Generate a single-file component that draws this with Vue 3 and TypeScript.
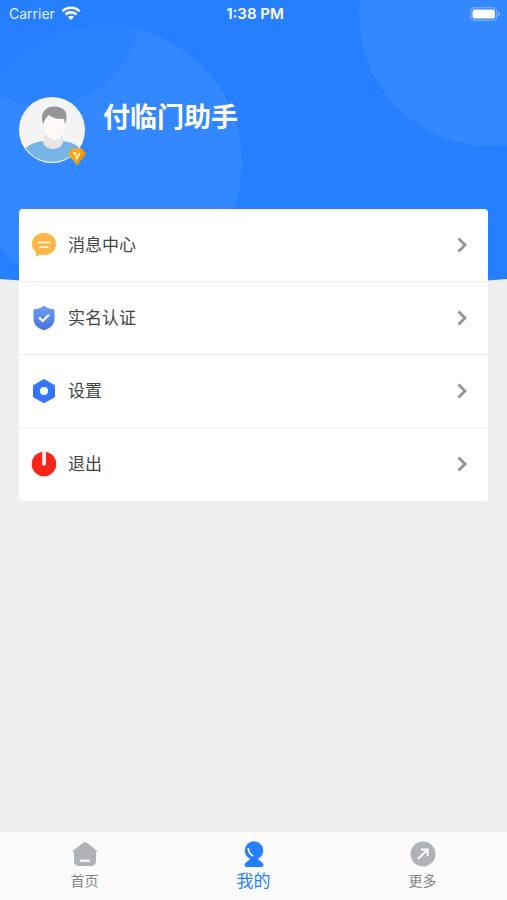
<script setup lang="ts">
import { ref } from 'vue'

type IconName = 'message' | 'shield' | 'settings' | 'power'
type TabName = 'home' | 'mine' | 'more'

const menu: { icon: IconName; label: string }[] = [
  { icon: 'message', label: '消息中心' },
  { icon: 'shield', label: '实名认证' },
  { icon: 'settings', label: '设置' },
  { icon: 'power', label: '退出' },
]

const tabs: { name: TabName; label: string }[] = [
  { name: 'home', label: '首页' },
  { name: 'mine', label: '我的' },
  { name: 'more', label: '更多' },
]

const active = ref<TabName>('mine')
</script>

<template>
  <div class="screen">
    <svg class="backdrop" viewBox="0 0 507 290" aria-hidden="true">
      <defs>
        <clipPath id="hero-shape"><path d="M0 0H507V279Q253 301 0 279Z" /></clipPath>
        <clipPath id="large-circle"><circle cx="106" cy="162" r="136" /></clipPath>
      </defs>
      <g clip-path="url(#hero-shape)">
        <rect width="507" height="290" fill="#267fff" />
        <circle cx="106" cy="162" r="136" fill="#3488ff" />
        <circle cx="43" cy="8" r="98" fill="#2a82ff" clip-path="url(#large-circle)" />
        <circle cx="490" cy="15" r="131" fill="#3488ff" />
      </g>
    </svg>

    <div class="status">
      <div class="carrier">
        <span>Carrier</span>
        <svg width="20" height="15" viewBox="0 0 20 15" aria-hidden="true">
          <g fill="none" stroke="#fff" stroke-width="2.6">
            <path d="M1.4 5.2C6.1.6 13.900.6 18.600 5.200" />
            <path d="M4.500 8.500C7.500 5.700 12.500 5.700 15.500 8.500" />
          </g>
          <path d="M6.900 10.900C8.600 9.300 11.400 9.300 13.100 10.900L10 14Z" fill="#fff" />
        </svg>
      </div>
      <span class="time">1:38 PM</span>
      <svg class="battery" width="31" height="14" viewBox="0 0 31 14" aria-hidden="true">
        <rect x=".7" y=".7" width="26" height="12.6" rx="4" fill="none" stroke="#79afff" stroke-width="1.2" />
        <rect x="2.5" y="2.5" width="22.5" height="9" rx="2.2" fill="#fff" />
        <path d="M28.2 4.8C30.4 5.4 30.4 8.6 28.2 9.2Z" fill="#8dbbff" />
      </svg>
    </div>

    <header class="profile">
      <div class="avatar">
        <svg width="66" height="66" viewBox="0 0 66 66" role="img" aria-label="头像">
          <defs><clipPath id="face"><circle cx="33" cy="33" r="32" /></clipPath></defs>
          <circle cx="33" cy="33" r="33" fill="#fff" />
          <g clip-path="url(#face)">
            <rect width="66" height="66" fill="#f4f4f4" />
            <path d="M3 66V54C10 47 17 45 24 44H44C51 45 58 47 64 54V66Z" fill="#77b4e7" />
            <path d="M25 37H44V45C43 50 38 52 34 52S25 50 24 45L25 43Z" fill="#e9e4e4" />
            <path d="M25 20Q35 14 46 20L45.500 32C45 38 40 43 35.500 43S26 38 25.500 32Z" fill="#fdf9f8" />
            <path d="M24 27C22 20 23 15 27 12C32 8 43 9 46 14C48 17 48 22 46 27L45 22C38 22 33 21 30 18C27 20 26 23 24 27Z" fill="#969696" />
          </g>
        </svg>
        <svg class="badge" width="18" height="17" viewBox="0 0 18 17" aria-hidden="true">
          <path d="M4 .5H14L18 6L9 17L0 6Z" fill="#fba816" />
          <path d="M14 .5L18 6L9 17V10L13 5Z" fill="#ee9310" />
          <path d="M5 5.200H7.200L9 10.500L12 5.200" fill="none" stroke="#fff2cd" stroke-width="1.700" />
        </svg>
      </div>
      <h1>付临门助手</h1>
    </header>

    <main>
      <nav class="card" aria-label="个人菜单">
        <a v-for="item in menu" :key="item.icon" href="#" class="row" @click.prevent>
          <svg class="icon" viewBox="0 0 26 26" aria-hidden="true">
            <template v-if="item.icon === 'message'">
              <path d="M13 1C19.8 1 25 5.4 25 12S19.8 23 13 23C11.5 23 10.3 22.8 9 22.4L5 25V20.3C2.4 18.3 1 15.4 1 12C1 5.4 6.2 1 13 1Z" fill="#ffb644" />
              <path d="M7 10.5H19M9 15H17" stroke="#fff0cf" stroke-width="1.8" stroke-linecap="round" />
            </template>
            <template v-else-if="item.icon === 'shield'">
              <defs>
                <linearGradient id="shield-fill" x2="0" y2="1">
                  <stop stop-color="#6b9cf0" /><stop offset="1" stop-color="#4474dc" />
                </linearGradient>
              </defs>
              <path d="M13 .7C16 3 19 4 23.500 4.300V14C23.500 19.500 19.500 23.200 13 25.300C6.500 23.200 2.500 19.500 2.500 14V4.300C7 4 10 3 13 .7Z" fill="url(#shield-fill)" />
              <path d="M8 12.500L11.700 16L18 9.800" fill="none" stroke="#fff" stroke-width="2.300" />
            </template>
            <template v-else-if="item.icon === 'settings'">
              <path d="M13 1.500L23.500 7.500V19L13 24.700L2.500 19V7.500Z" fill="#3476fa" stroke="#3476fa" stroke-width="1" stroke-linejoin="round" />
              <circle cx="13" cy="13" r="4" fill="#fff" />
            </template>
            <template v-else>
              <circle cx="13" cy="13" r="12.300" fill="#f7261b" />
              <path d="M11.200 0H15V12.700A1.900 1.900 0 0 1 11.200 12.700Z" fill="#ffecea" />
            </template>
          </svg>
          <span class="label">{{ item.label }}</span>
          <svg class="chevron" viewBox="0 0 10 16" aria-hidden="true">
            <path d="M1.500 1.500L8 8L1.500 14.500" fill="none" stroke="#929292" stroke-width="2.800" />
          </svg>
        </a>
      </nav>
    </main>

    <nav class="tabs" aria-label="主导航">
      <button
        v-for="tab in tabs"
        :key="tab.name"
        type="button"
        class="tab"
        :class="{ active: active === tab.name }"
        @click="active = tab.name"
      >
        <svg class="icon" viewBox="0 0 26 26" aria-hidden="true">
          <template v-if="tab.name === 'home'">
            <path d="M11.500 1.400Q13 .4 14.500 1.400L25 9.700Q26 11 24 11.200V20Q24 25 19 25H7Q2 25 2 20V11.200Q0 11 1 9.700Z" fill="currentColor" />
            <rect x="8" y="18.500" width="10" height="2.500" rx="1" fill="#f4f4f5" />
          </template>
          <template v-else-if="tab.name === 'mine'">
            <circle cx="13" cy="9.500" r="9.300" fill="currentColor" />
            <path d="M9 17H17C17 20 22.500 21 22.500 24Q22.500 26 20.500 26H5.500Q3.500 26 3.500 24C3.500 21 9 20 9 17Z" fill="currentColor" />
            <path d="M7.300 8Q7.800 12.500 11.500 14.500" fill="none" stroke="#fff" stroke-width="1.800" stroke-linecap="round" />
          </template>
          <template v-else>
            <circle cx="13" cy="13" r="12.500" fill="currentColor" />
            <path d="M8 18L17 9M11 8.500H17.700V15" fill="none" stroke="#fff" stroke-width="1.900" />
          </template>
        </svg>
        <span>{{ tab.label }}</span>
      </button>
    </nav>
  </div>
</template>

<style>
body {
  margin: 0;
}
</style>

<style scoped>
.screen {
  position: relative;
  isolation: isolate;
  display: flex;
  flex-direction: column;
  min-height: 100vh;
  background: #efefef;
  font-family: Inter, "Noto Sans CJK SC", sans-serif;
}

.backdrop {
  position: absolute;
  top: 0;
  left: 0;
  z-index: -1;
  width: 100%;
}

.status {
  display: grid;
  grid-template-columns: 1fr auto 1fr;
  align-items: center;
  height: 27px;
  padding: 0 6px 0 9px;
  color: #fff;
  font-size: 14px;
}

.carrier {
  display: flex;
  align-items: center;
  gap: 6px;
  color: #e4efff;
}

.time {
  font-size: 15px;
  font-weight: 600;
}

.battery {
  justify-self: end;
}

.profile {
  display: flex;
  gap: 18px;
  padding: 70px 19px 0;
  height: 112px;
}

.avatar {
  position: relative;
  width: 66px;
  height: 66px;
}

.badge {
  position: absolute;
  right: -1px;
  bottom: -2px;
}

h1 {
  margin: 0;
  color: #fff;
  font-size: 27px;
  line-height: 42px;
  font-weight: 700;
}

main {
  flex: 1;
  padding: 0 19px;
}

.card {
  overflow: hidden;
  border-radius: 4px;
  background: #fff;
}

.row {
  display: flex;
  align-items: center;
  box-sizing: border-box;
  height: 73px;
  padding: 0 21px 0 12px;
  border-bottom: 1px solid #f0f0f0;
  color: #444;
  font-size: 17px;
  line-height: 24px;
  text-decoration: none;
}

.row:last-child {
  border-color: transparent;
}

.icon {
  width: 26px;
  height: 26px;
}

.label {
  flex: 1;
  margin-left: 11px;
}

.chevron {
  width: 10px;
  height: 16px;
}

.tabs {
  display: grid;
  grid-template-columns: repeat(3, 1fr);
  height: 68px;
  background: #fbfbfb;
  box-shadow: 0 -1px 3px rgba(0, 0, 0, 0.02);
}

.tab {
  display: flex;
  flex-direction: column;
  align-items: center;
  gap: 2px;
  padding: 9px 0 0;
  border: 0;
  background: none;
  color: #afb3b8;
  font: inherit;
  font-size: 14px;
  line-height: 24px;
}

.tab span {
  color: #858585;
}

.tab.active,
.tab.active span {
  color: #267fff;
}

.tab.active span {
  font-size: 17px;
}
</style>
